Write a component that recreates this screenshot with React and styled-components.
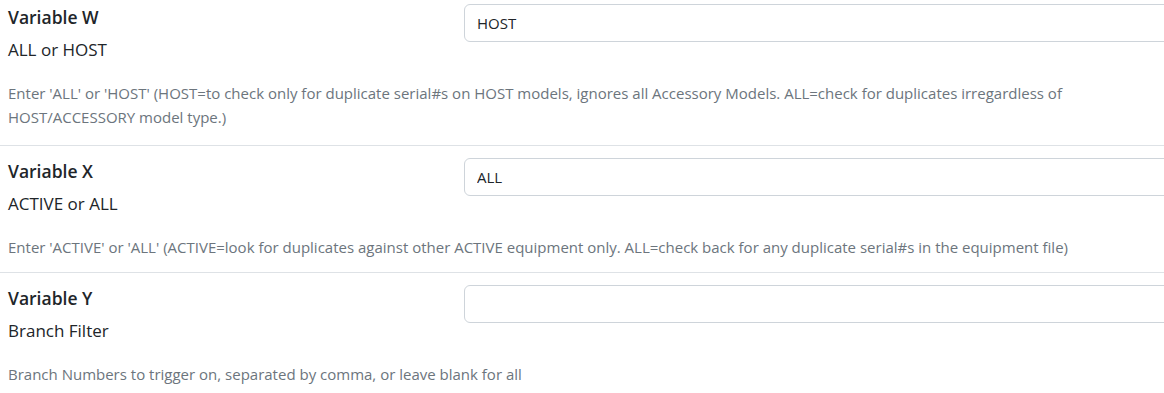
import React from "react";
import styled, { createGlobalStyle } from "styled-components";

const Global = createGlobalStyle`
  html, body { margin: 0; padding: 0; background: #fff; overflow: hidden; }
  body { font-family: "Open Sans", "Noto Sans", sans-serif; color: #212529; }
`;

const List = styled.div`
  width: 1200px;
`;

const Row = styled.div`
  display: grid;
  grid-template-columns: 464px 1fr;
  padding: ${(p) => (p.$first ? "0 0 16px" : "12px 0 13px")};
  border-bottom: ${(p) => (p.$last ? "none" : "1px solid #dee2e6")};
  margin-top: ${(p) => (p.$first ? "-8px" : "0")};
`;

const Labels = styled.div`
  padding-left: 8px;
  padding-top: ${(p) => (p.$first ? "12px" : "0")};
`;

const Title = styled.div`
  font-size: 17.5px;
  font-weight: 600;
  line-height: 26px;
  color: #212529;
`;

const Subtitle = styled.div`
  margin-top: 8px;
  font-size: 17px;
  line-height: 24px;
  color: #212529;
`;

const InputCell = styled.div`
  padding-top: ${(p) => (p.$first ? "12px" : "0")};
`;

const Input = styled.input`
  box-sizing: border-box;
  display: block;
  width: 760px;
  height: 38px;
  padding: 6px 12px;
  font-family: inherit;
  font-size: 15px;
  color: #212529;
  background: #fff;
  border: 1px solid #ced4da;
  border-radius: 6px;
  outline: none;
`;

const Desc = styled.div`
  grid-column: 1 / -1;
  padding-left: 8px;
  margin-top: 19px;
  width: 1080px;
  font-size: 15px;
  line-height: 24px;
  color: #6c757d;
`;

const rows = [
  {
    title: "Variable W",
    sub: "ALL or HOST",
    value: "HOST",
    desc:
      "Enter 'ALL' or 'HOST' (HOST=to check only for duplicate serial#s on HOST models, ignores all Accessory Models. ALL=check for duplicates irregardless of HOST/ACCESSORY model type.)",
  },
  {
    title: "Variable X",
    sub: "ACTIVE or ALL",
    value: "ALL",
    desc:
      "Enter 'ACTIVE' or 'ALL' (ACTIVE=look for duplicates against other ACTIVE equipment only. ALL=check back for any duplicate serial#s in the equipment file)",
  },
  {
    title: "Variable Y",
    sub: "Branch Filter",
    value: "",
    desc: "Branch Numbers to trigger on, separated by comma, or leave blank for all",
  },
];

export default function App() {
  return (
    <>
      <Global />
      <List>
        {rows.map((r, i) => (
          <Row key={r.title} $first={i === 0} $last={i === rows.length - 1}>
            <Labels $first={i === 0}>
              <Title>{r.title}</Title>
              <Subtitle>{r.sub}</Subtitle>
            </Labels>
            <InputCell $first={i === 0}>
              <Input defaultValue={r.value} readOnly />
            </InputCell>
            <Desc>{r.desc}</Desc>
          </Row>
        ))}
      </List>
    </>
  );
}
